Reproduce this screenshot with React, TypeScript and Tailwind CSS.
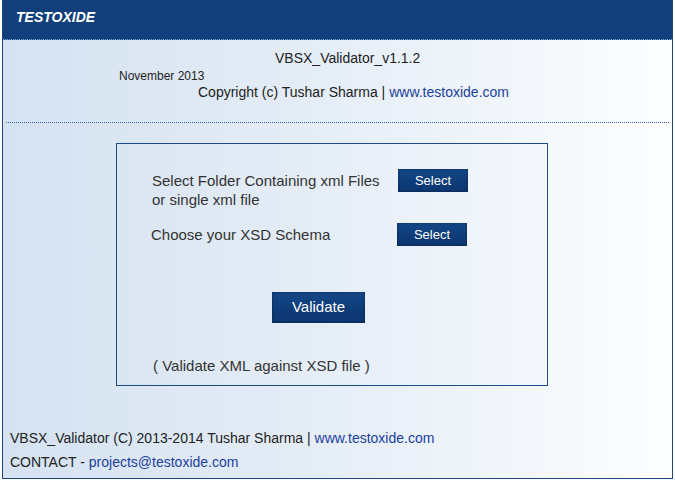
const font = { fontFamily: '"Liberation Sans", Arial, sans-serif' };

function BlueButton({ label, className }: { label: string; className: string }) {
  return (
    <button
      className={
        'flex items-center justify-center text-white bg-gradient-to-b from-[#154888] via-[#0e3d7a] to-[#0c3670] shadow-[inset_0_0_3px_rgba(0,0,0,0.45)] ' +
        className
      }
    >
      {label}
    </button>
  );
}

export default function App() {
  return (
    <div className="w-[675px] h-[480px] bg-white" style={font}>
      <div className="ml-[2px] w-[671px] h-[479px] border border-t-0 border-[#1b4582] bg-gradient-to-r from-[#d5e2f1] via-[#e6eef7] to-[#fdfeff] flex flex-col text-[#333333]">
        {/* header */}
        <div className="h-[40px] bg-[#103f7b] border-b border-dotted border-[#8aa6cf] flex items-center pl-[13px] pb-[4px]">
          <span className="text-white text-[14px] font-bold italic">TESTOXIDE</span>
        </div>

        {/* title block */}
        <div className="flex flex-col">
          <div className="mt-[10px] h-[17px] leading-[17px] text-[14px] text-[#222] pl-[272px]">
            VBSX_Validator_v1.1.2
          </div>
          <div className="h-[16px] leading-[16px] text-[12px] text-[#222] pl-[116px] mt-[1px]">November 2013</div>
          <div className="h-[17px] leading-[17px] text-[14px] text-[#222] pl-[195px]">
            Copyright (c) Tushar Sharma | <span className="text-[#1b3f9c]">www.testoxide.com</span>
          </div>
        </div>

        <div className="mt-[21px] mx-[3px] border-t border-dotted border-[#3463a6]" />

        {/* main box */}
        <div className="mt-[20px] ml-[113px] w-[432px] h-[243px] border border-[#1d4a8a] flex flex-col">
          <div className="mt-[27px] ml-[35px] flex items-start">
            <div className="w-[246px] text-[15px] leading-[19px] text-[#333]">
              <div>Select Folder Containing xml Files</div>
              <div>or single xml file</div>
            </div>
            <BlueButton label="Select" className="mt-[-2px] w-[70px] h-[23px] text-[13px]" />
          </div>
          <div className="mt-[14px] ml-[34px] flex items-center">
            <div className="w-[246px] text-[15px] leading-[19px] text-[#333]">Choose your XSD Schema</div>
            <BlueButton label="Select" className="w-[70px] h-[23px] text-[13px]" />
          </div>
          <BlueButton label="Validate" className="mt-[46px] ml-[155px] w-[93px] h-[31px] text-[15px]" />
          <div className="mt-[33px] ml-[36px] text-[15px] leading-[19px] text-[#333]">( Validate XML against XSD file )</div>
        </div>

        {/* footer */}
        <div className="mt-[40px] pl-[7px] text-[14px] leading-[24px] text-[#222]">
          <div>
            VBSX_Validator (C) 2013-2014 Tushar Sharma | <span className="text-[#1b3f9c]">www.testoxide.com</span>
          </div>
          <div>
            CONTACT - <span className="text-[#1b3f9c]">projects@testoxide.com</span>
          </div>
        </div>
      </div>
    </div>
  );
}
